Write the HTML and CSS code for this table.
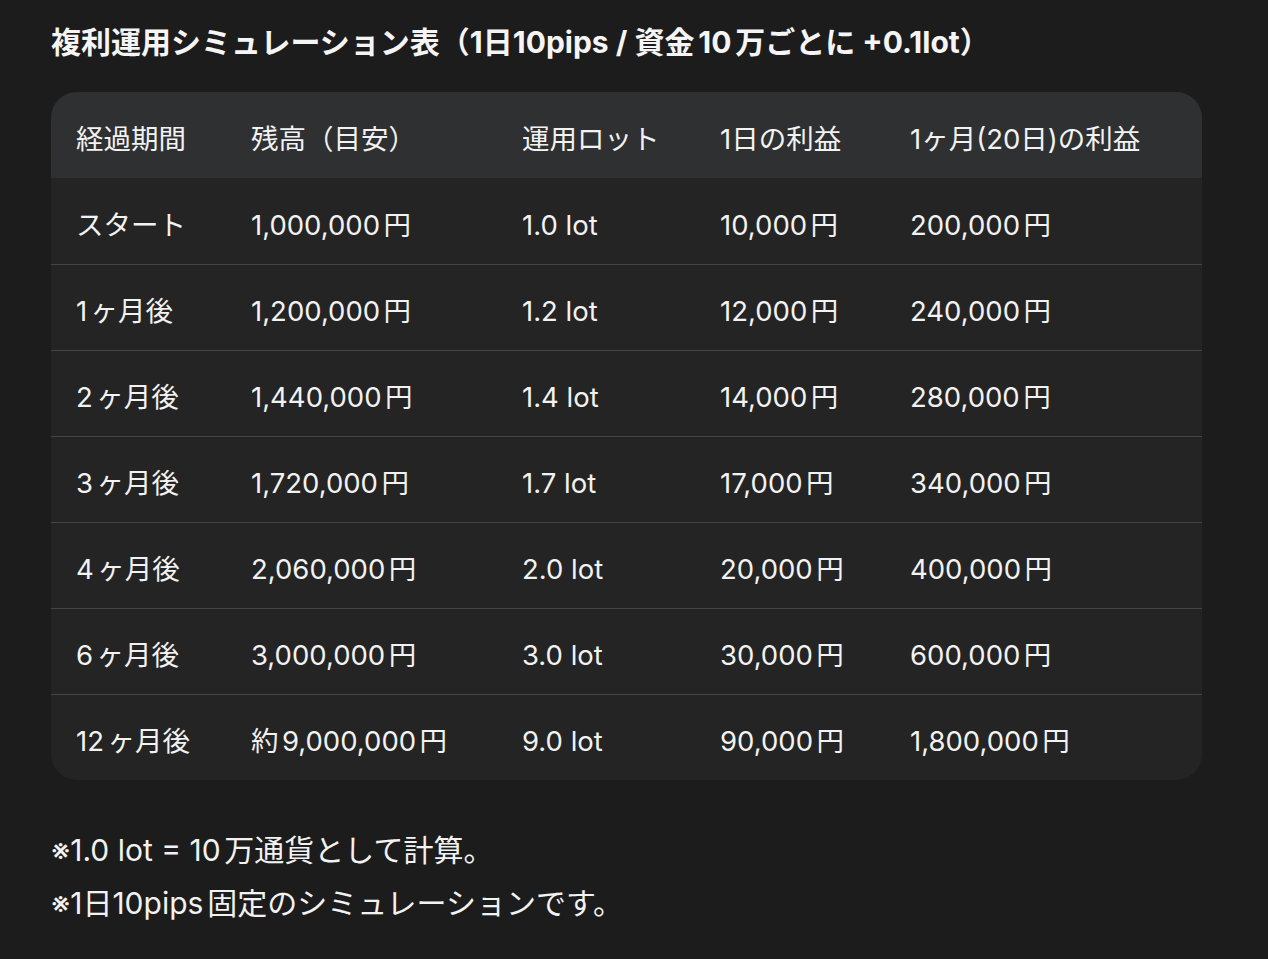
FILE: index.html
```html
<!DOCTYPE html>
<html lang="ja">
<head>
<meta charset="utf-8">
<title>複利運用シミュレーション表</title>
<link rel="stylesheet" href="styles.css">
</head>
<body>
<main class="page">
  <h1 class="title">複利運用シミュレーション表（<span class="tight">1日10</span>pips / 資金10万ごとに +0.1lot）</h1>
  <div class="card">
    <table class="sim">
      <thead>
        <tr>
          <th class="c1">経過期間</th>
          <th class="c2">残高（目安）</th>
          <th class="c3">運用ロット</th>
          <th class="c4"><span class="tight">1日の利益</span></th>
          <th class="c5"><span class="tight">1ヶ月(20日)の利益</span></th>
        </tr>
      </thead>
      <tbody>
        <tr><td>スタート</td><td>1,000,000円</td><td>1.0 lot</td><td>10,000円</td><td>200,000円</td></tr>
        <tr><td>1ヶ月後</td><td>1,200,000円</td><td>1.2 lot</td><td>12,000円</td><td>240,000円</td></tr>
        <tr><td>2ヶ月後</td><td>1,440,000円</td><td>1.4 lot</td><td>14,000円</td><td>280,000円</td></tr>
        <tr><td>3ヶ月後</td><td>1,720,000円</td><td>1.7 lot</td><td>17,000円</td><td>340,000円</td></tr>
        <tr><td>4ヶ月後</td><td>2,060,000円</td><td>2.0 lot</td><td>20,000円</td><td>400,000円</td></tr>
        <tr><td>6ヶ月後</td><td>3,000,000円</td><td>3.0 lot</td><td>30,000円</td><td>600,000円</td></tr>
        <tr><td>12ヶ月後</td><td>約9,000,000円</td><td>9.0 lot</td><td>90,000円</td><td>1,800,000円</td></tr>
      </tbody>
    </table>
  </div>
  <div class="notes">
    <p>※1.0 lot = 10万通貨として計算。</p>
    <p>※<span class="tight">1日10</span>pips固定のシミュレーションです。</p>
  </div>
</main>
</body>
</html>
```

FILE: styles.css
```css
html, body {
  margin: 0;
  padding: 0;
  background: #1c1c1c;
}
body {
  color: #f2f2f2;
  font-family: Inter, "Noto Sans CJK JP", sans-serif;
  text-autospace: normal;
}
.tight {
  text-autospace: no-autospace;
}
.page {
  padding: 22px 66px 0 51px;
}
.title {
  margin: 0;
  font-size: 30px;
  line-height: 40px;
  font-weight: 700;
  color: #f5f5f5;
}
.card {
  margin-top: 30px;
  width: 1151px;
  border-radius: 26px;
  overflow: hidden;
  background: #242424;
}
.sim {
  width: 100%;
  border-collapse: collapse;
  table-layout: fixed;
  font-size: 27.5px;
  line-height: 34px;
}
.sim th, .sim td {
  height: 86px;
  padding: 8px 0 0 25px;
  text-align: left;
  vertical-align: middle;
  font-weight: 400;
  box-sizing: border-box;
  white-space: nowrap;
}
.sim thead tr {
  background: #2f3032;
}
.sim tbody tr + tr td {
  border-top: 1px solid #454545;
}
.c1 { width: 175px; }
.c2 { width: 271px; }
.c3 { width: 198px; }
.c4 { width: 190px; }
.notes {
  margin-top: 44px;
  font-size: 30px;
  line-height: 53px;
}
.notes p {
  margin: 0;
}
```
